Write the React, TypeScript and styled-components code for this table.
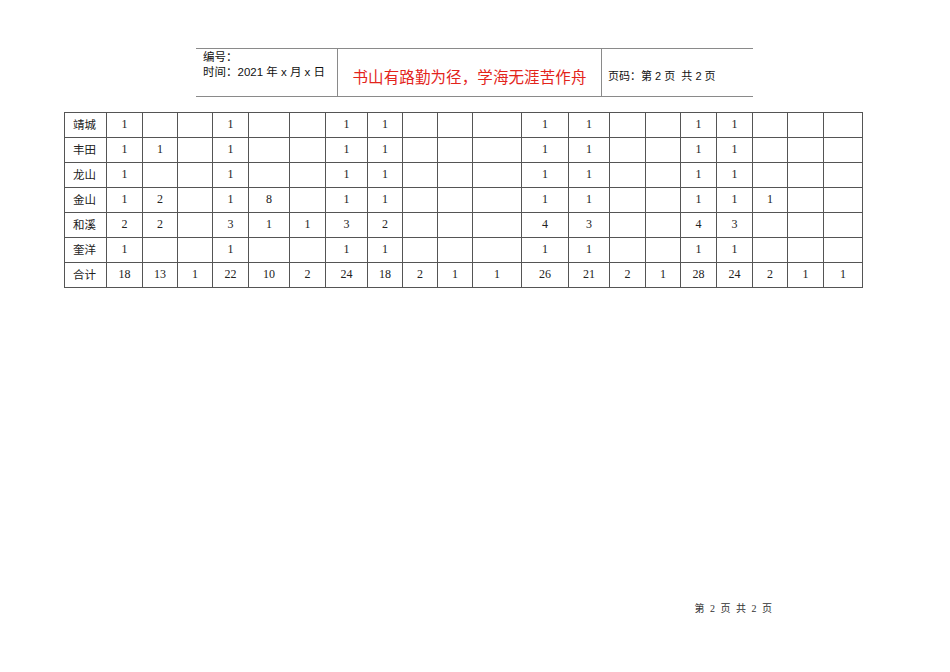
import styled, { createGlobalStyle } from "styled-components";

const GlobalStyle = createGlobalStyle`
  html, body {
    margin: 0;
    padding: 0;
    background: #ffffff;
  }
  body {
    font-family: "Noto Sans CJK SC", "Liberation Sans", sans-serif;
    color: #111;
  }
`;

const Page = styled.div`
  width: 950px;
  height: 672px;
  display: flex;
  flex-direction: column;
`;

const Header = styled.div`
  display: flex;
  margin: 48px 0 0 196px;
  width: 557px;
  height: 47px;
  border-top: 1px solid #8a8a8a;
  border-bottom: 1px solid #8a8a8a;
`;

const HeaderCell = styled.div<{ $width: number; $divider?: boolean }>`
  width: ${(p) => p.$width}px;
  flex-shrink: 0;
  border-right: ${(p) => (p.$divider ? "1px solid #8a8a8a" : "none")};
  display: flex;
  flex-direction: column;
`;

const MetaLine = styled.span`
  font-family: "Liberation Sans", "Noto Sans CJK SC", sans-serif;
  font-size: 11.5px;
  line-height: 15px;
  color: #111;
  padding-left: 7px;
`;

const Motto = styled.div`
  flex: 1;
  display: flex;
  align-items: center;
  justify-content: center;
  padding-top: 6px;
  font-size: 15.5px;
  font-weight: 400;
  letter-spacing: 0.1px;
  color: #e3241b;
`;

const PageInfo = styled.div`
  flex: 1;
  display: flex;
  align-items: center;
  padding: 5px 0 0 6px;
  font-family: "Liberation Sans", "Noto Sans CJK SC", sans-serif;
  font-size: 11px;
  color: #111;
`;

const Table = styled.table`
  margin: 15px 0 0 64px;
  border-collapse: collapse;
  table-layout: fixed;
  width: 799px;
`;

const Row = styled.tr`
  height: 25px;
`;

const Cell = styled.td<{ $label?: boolean }>`
  border: 1px solid #555;
  padding: 0 0 2px ${(p) => (p.$label ? "8px" : "0")};
  text-align: ${(p) => (p.$label ? "left" : "center")};
  font-family: ${(p) =>
    p.$label
      ? `"Noto Sans CJK SC", serif`
      : `"Liberation Serif", "DejaVu Serif", serif`};
  font-size: ${(p) => (p.$label ? "11.5px" : "12px")};
  color: #222;
  white-space: nowrap;
  overflow: hidden;
`;

const Footer = styled.div`
  margin-top: auto;
  margin-bottom: 57px;
  align-self: flex-end;
  padding-right: 178px;
  font-family: "Liberation Serif", "Noto Sans CJK SC", serif;
  font-size: 10px;
  color: #333;
  word-spacing: 3px;
`;

const widths = [42, 36, 35, 35, 36, 41, 36, 42, 35, 35, 35, 49, 47, 41, 36, 35, 36, 36, 35, 36, 39];

const e = "";

const rows: { name: string; values: (number | string)[] }[] = [
  { name: "靖城", values: [1, e, e, 1, e, e, 1, 1, e, e, e, 1, 1, e, e, 1, 1, e, e, e] },
  { name: "丰田", values: [1, 1, e, 1, e, e, 1, 1, e, e, e, 1, 1, e, e, 1, 1, e, e, e] },
  { name: "龙山", values: [1, e, e, 1, e, e, 1, 1, e, e, e, 1, 1, e, e, 1, 1, e, e, e] },
  { name: "金山", values: [1, 2, e, 1, 8, e, 1, 1, e, e, e, 1, 1, e, e, 1, 1, 1, e, e] },
  { name: "和溪", values: [2, 2, e, 3, 1, 1, 3, 2, e, e, e, 4, 3, e, e, 4, 3, e, e, e] },
  { name: "奎洋", values: [1, e, e, 1, e, e, 1, 1, e, e, e, 1, 1, e, e, 1, 1, e, e, e] },
  { name: "合计", values: [18, 13, 1, 22, 10, 2, 24, 18, 2, 1, 1, 26, 21, 2, 1, 28, 24, 2, 1, 1] },
];

export default function App() {
  return (
    <Page>
      <GlobalStyle />
      <Header>
        <HeaderCell $width={141} $divider>
          <MetaLine style={{ marginTop: 1 }}>编号：</MetaLine>
          <MetaLine>时间：2021 年 x 月 x 日</MetaLine>
        </HeaderCell>
        <HeaderCell $width={263} $divider>
          <Motto>书山有路勤为径，学海无涯苦作舟</Motto>
        </HeaderCell>
        <HeaderCell $width={151}>
          <PageInfo>页码：第 2 页&nbsp; 共 2 页</PageInfo>
        </HeaderCell>
      </Header>

      <Table>
        <colgroup>
          {widths.map((w, i) => (
            <col key={i} style={{ width: w }} />
          ))}
        </colgroup>
        <tbody>
          {rows.map((r) => (
            <Row key={r.name}>
              <Cell $label>{r.name}</Cell>
              {r.values.map((v, i) => (
                <Cell key={i}>{v}</Cell>
              ))}
            </Row>
          ))}
        </tbody>
      </Table>

      <Footer>第 2 页 共 2 页</Footer>
    </Page>
  );
}
